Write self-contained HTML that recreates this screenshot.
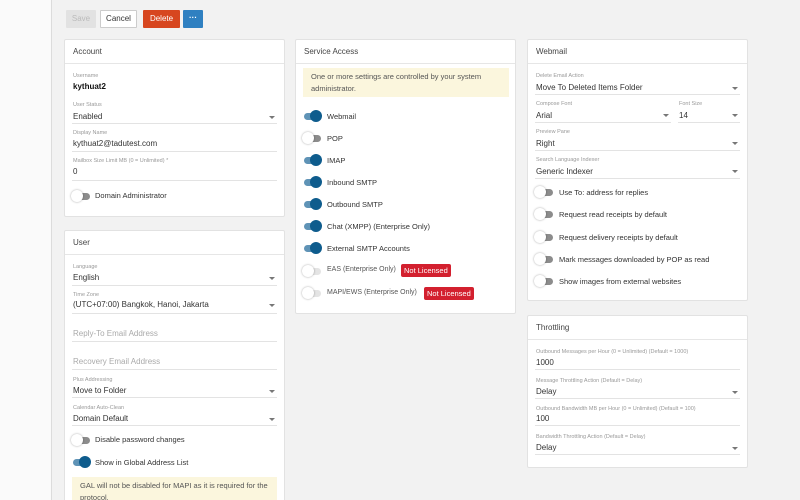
<!DOCTYPE html>
<html><head><meta charset="utf-8"><style>
*{margin:0;padding:0;box-sizing:border-box}
html,body{width:800px;height:500px;overflow:hidden}
body{background:#f2f2f2;font-family:"Liberation Sans",sans-serif;position:relative;color:#333}
.side{position:absolute;left:0;top:0;width:52px;height:500px;background:#fafafa;border-right:1px solid #dcdcdc}
.card{position:absolute;background:#fff;border:1px solid #e2e2e2;border-radius:2px}
.hd{position:absolute;left:0;right:0;top:0;height:24px;border-bottom:1px solid #e6e6e6;font-size:8px;padding:7px 8px;color:#444}
.lab{position:absolute;font-size:5.5px;color:#999;white-space:nowrap}
.val{position:absolute;font-size:8px;color:#333;white-space:nowrap}
.ph{position:absolute;font-size:8px;color:#aaa;white-space:nowrap}
.ln{position:absolute;height:1px;background:#e3e3e3}
.arr{position:absolute;width:0;height:0;border-left:3px solid transparent;border-right:3px solid transparent;border-top:3px solid #777}
.tg{position:absolute;width:20px;height:12px}
.tg .tr{position:absolute;left:2px;top:3px;width:17px;height:7px;border-radius:4px;background:#aaa}
.tg .kn{position:absolute;top:0;width:12px;height:12px;border-radius:50%}
.tg.on .tr{background:#5f93b6}
.tg.on .kn{left:8px;background:#0e5c8d}
.tg.off .tr{background:linear-gradient(90deg,#ddd 40%,#8c8c8c 40%)}
.tg.off .kn{left:0;background:#fff;box-shadow:0 0 2px rgba(0,0,0,.35)}
.tl{position:absolute;font-size:7.5px;color:#333;white-space:nowrap}
.warn{position:absolute;background:#fbf6dd;font-size:7.5px;color:#555;line-height:12px;padding:3px 8px}
.badge{position:absolute;background:#d3202f;color:#fff;font-size:7.5px;height:13px;line-height:13px;padding:0 3px;border-radius:2px}
.btn{position:absolute;top:10px;height:18px;font-size:8px;line-height:18px;text-align:center;border-radius:1px}
</style></head><body>
<div class="side"></div>
<div class="btn" style="left:66px;width:30px;background:#e2e2e2;color:#bbb">Save</div>
<div class="btn" style="left:100px;width:37px;background:#fff;border:1px solid #ccc;line-height:16px;color:#333">Cancel</div>
<div class="btn" style="left:143px;width:37px;background:#d7461f;color:#fff">Delete</div>
<div class="btn" style="left:183px;width:20px;background:#2f80c1;color:#fff;font-weight:bold;line-height:15px">···</div>

<!-- Account -->
<div class="card" style="left:64px;top:39px;width:221px;height:178px"><div class="hd">Account</div></div>
<div class="lab" style="left:73px;top:73px">Username</div>
<div class="val" style="left:73px;top:82px;font-weight:bold;color:#111">kythuat2</div>
<div class="lab" style="left:73px;top:102px">User Status</div>
<div class="val" style="left:73px;top:112px">Enabled</div><div class="arr" style="left:269px;top:116px"></div>
<div class="ln" style="left:72px;top:123px;width:205px"></div>
<div class="lab" style="left:73px;top:130px">Display Name</div>
<div class="val" style="left:73px;top:139px">kythuat2@tadutest.com</div>
<div class="ln" style="left:72px;top:151px;width:205px"></div>
<div class="lab" style="left:73px;top:158px">Mailbox Size Limit MB (0 = Unlimited) *</div>
<div class="val" style="left:73px;top:167px">0</div>
<div class="ln" style="left:72px;top:180px;width:205px"></div>
<div class="tg off" style="left:71px;top:190px"><div class="tr"></div><div class="kn"></div></div>
<div class="tl" style="left:95px;top:191px">Domain Administrator</div>

<!-- User -->
<div class="card" style="left:64px;top:230px;width:221px;height:275px"><div class="hd">User</div></div>
<div class="lab" style="left:73px;top:264px">Language</div>
<div class="val" style="left:73px;top:273px">English</div><div class="arr" style="left:269px;top:277px"></div>
<div class="ln" style="left:72px;top:285px;width:205px"></div>
<div class="lab" style="left:73px;top:292px">Time Zone</div>
<div class="val" style="left:73px;top:300px">(UTC+07:00) Bangkok, Hanoi, Jakarta</div><div class="arr" style="left:269px;top:304px"></div>
<div class="ln" style="left:72px;top:313px;width:205px"></div>
<div class="ph" style="left:73px;top:329px">Reply-To Email Address</div>
<div class="ln" style="left:72px;top:341px;width:205px"></div>
<div class="ph" style="left:73px;top:357px">Recovery Email Address</div>
<div class="ln" style="left:72px;top:369px;width:205px"></div>
<div class="lab" style="left:73px;top:377px">Plus Addressing</div>
<div class="val" style="left:73px;top:386px">Move to Folder</div><div class="arr" style="left:269px;top:390px"></div>
<div class="ln" style="left:72px;top:397px;width:205px"></div>
<div class="lab" style="left:73px;top:405px">Calendar Auto-Clean</div>
<div class="val" style="left:73px;top:414px">Domain Default</div><div class="arr" style="left:269px;top:418px"></div>
<div class="ln" style="left:72px;top:425px;width:205px"></div>
<div class="tg off" style="left:71px;top:434px"><div class="tr"></div><div class="kn"></div></div>
<div class="tl" style="left:95px;top:435px">Disable password changes</div>
<div class="tg on" style="left:71px;top:456px"><div class="tr"></div><div class="kn"></div></div>
<div class="tl" style="left:95px;top:458px">Show in Global Address List</div>
<div class="warn" style="left:72px;top:477px;width:205px;height:30px">GAL will not be disabled for MAPI as it is required for the protocol.</div>

<!-- Service Access -->
<div class="card" style="left:295px;top:39px;width:221px;height:275px"><div class="hd">Service Access</div></div>
<div class="warn" style="left:303px;top:68px;width:206px;height:29px">One or more settings are controlled by your system administrator.</div>
<div class="tg on" style="left:302px;top:110px"><div class="tr"></div><div class="kn"></div></div><div class="tl" style="left:327px;top:112px">Webmail</div>
<div class="tg off" style="left:302px;top:132px"><div class="tr"></div><div class="kn"></div></div><div class="tl" style="left:327px;top:134px">POP</div>
<div class="tg on" style="left:302px;top:154px"><div class="tr"></div><div class="kn"></div></div><div class="tl" style="left:327px;top:156px">IMAP</div>
<div class="tg on" style="left:302px;top:176px"><div class="tr"></div><div class="kn"></div></div><div class="tl" style="left:327px;top:178px">Inbound SMTP</div>
<div class="tg on" style="left:302px;top:198px"><div class="tr"></div><div class="kn"></div></div><div class="tl" style="left:327px;top:200px">Outbound SMTP</div>
<div class="tg on" style="left:302px;top:220px"><div class="tr"></div><div class="kn"></div></div><div class="tl" style="left:327px;top:222px">Chat (XMPP) (Enterprise Only)</div>
<div class="tg on" style="left:302px;top:242px"><div class="tr"></div><div class="kn"></div></div><div class="tl" style="left:327px;top:244px">External SMTP Accounts</div>
<div class="tg off" style="left:302px;top:265px"><div class="tr" style="background:#e4e4e4"></div><div class="kn"></div></div><div class="tl" style="left:327px;top:266px;color:#555;font-size:7px">EAS (Enterprise Only)</div>
<div class="badge" style="left:401px;top:264px">Not Licensed</div>
<div class="tg off" style="left:302px;top:287px"><div class="tr" style="background:#e4e4e4"></div><div class="kn"></div></div><div class="tl" style="left:327px;top:289px;color:#555;font-size:7px">MAPI/EWS (Enterprise Only)</div>
<div class="badge" style="left:424px;top:287px">Not Licensed</div>

<!-- Webmail -->
<div class="card" style="left:527px;top:39px;width:221px;height:262px"><div class="hd">Webmail</div></div>
<div class="lab" style="left:536px;top:73px">Delete Email Action</div>
<div class="val" style="left:536px;top:83px">Move To Deleted Items Folder</div><div class="arr" style="left:732px;top:87px"></div>
<div class="ln" style="left:535px;top:94px;width:205px"></div>
<div class="lab" style="left:536px;top:101px">Compose Font</div>
<div class="val" style="left:536px;top:111px">Arial</div><div class="arr" style="left:663px;top:114px"></div>
<div class="ln" style="left:535px;top:122px;width:136px"></div>
<div class="lab" style="left:679px;top:101px">Font Size</div>
<div class="val" style="left:679px;top:111px">14</div><div class="arr" style="left:732px;top:114px"></div>
<div class="ln" style="left:678px;top:122px;width:62px"></div>
<div class="lab" style="left:536px;top:129px">Preview Pane</div>
<div class="val" style="left:536px;top:139px">Right</div><div class="arr" style="left:732px;top:142px"></div>
<div class="ln" style="left:535px;top:150px;width:205px"></div>
<div class="lab" style="left:536px;top:157px">Search Language Indexer</div>
<div class="val" style="left:536px;top:167px">Generic Indexer</div><div class="arr" style="left:732px;top:170px"></div>
<div class="ln" style="left:535px;top:178px;width:205px"></div>
<div class="tg off" style="left:534px;top:186px"><div class="tr"></div><div class="kn"></div></div><div class="tl" style="left:559px;top:188px">Use To: address for replies</div>
<div class="tg off" style="left:534px;top:208px"><div class="tr"></div><div class="kn"></div></div><div class="tl" style="left:559px;top:210px">Request read receipts by default</div>
<div class="tg off" style="left:534px;top:231px"><div class="tr"></div><div class="kn"></div></div><div class="tl" style="left:559px;top:233px">Request delivery receipts by default</div>
<div class="tg off" style="left:534px;top:253px"><div class="tr"></div><div class="kn"></div></div><div class="tl" style="left:559px;top:255px">Mark messages downloaded by POP as read</div>
<div class="tg off" style="left:534px;top:275px"><div class="tr"></div><div class="kn"></div></div><div class="tl" style="left:559px;top:277px">Show images from external websites</div>

<!-- Throttling -->
<div class="card" style="left:527px;top:315px;width:221px;height:153px"><div class="hd">Throttling</div></div>
<div class="lab" style="left:536px;top:349px">Outbound Messages per Hour (0 = Unlimited) (Default = 1000)</div>
<div class="val" style="left:536px;top:358px">1000</div>
<div class="ln" style="left:535px;top:369px;width:205px"></div>
<div class="lab" style="left:536px;top:378px">Message Throttling Action (Default = Delay)</div>
<div class="val" style="left:536px;top:387px">Delay</div><div class="arr" style="left:732px;top:391px"></div>
<div class="ln" style="left:535px;top:398px;width:205px"></div>
<div class="lab" style="left:536px;top:406px">Outbound Bandwidth MB per Hour (0 = Unlimited) (Default = 100)</div>
<div class="val" style="left:536px;top:414px">100</div>
<div class="ln" style="left:535px;top:425px;width:205px"></div>
<div class="lab" style="left:536px;top:434px">Bandwidth Throttling Action (Default = Delay)</div>
<div class="val" style="left:536px;top:443px">Delay</div><div class="arr" style="left:732px;top:447px"></div>
<div class="ln" style="left:535px;top:454px;width:205px"></div>
</body></html>
